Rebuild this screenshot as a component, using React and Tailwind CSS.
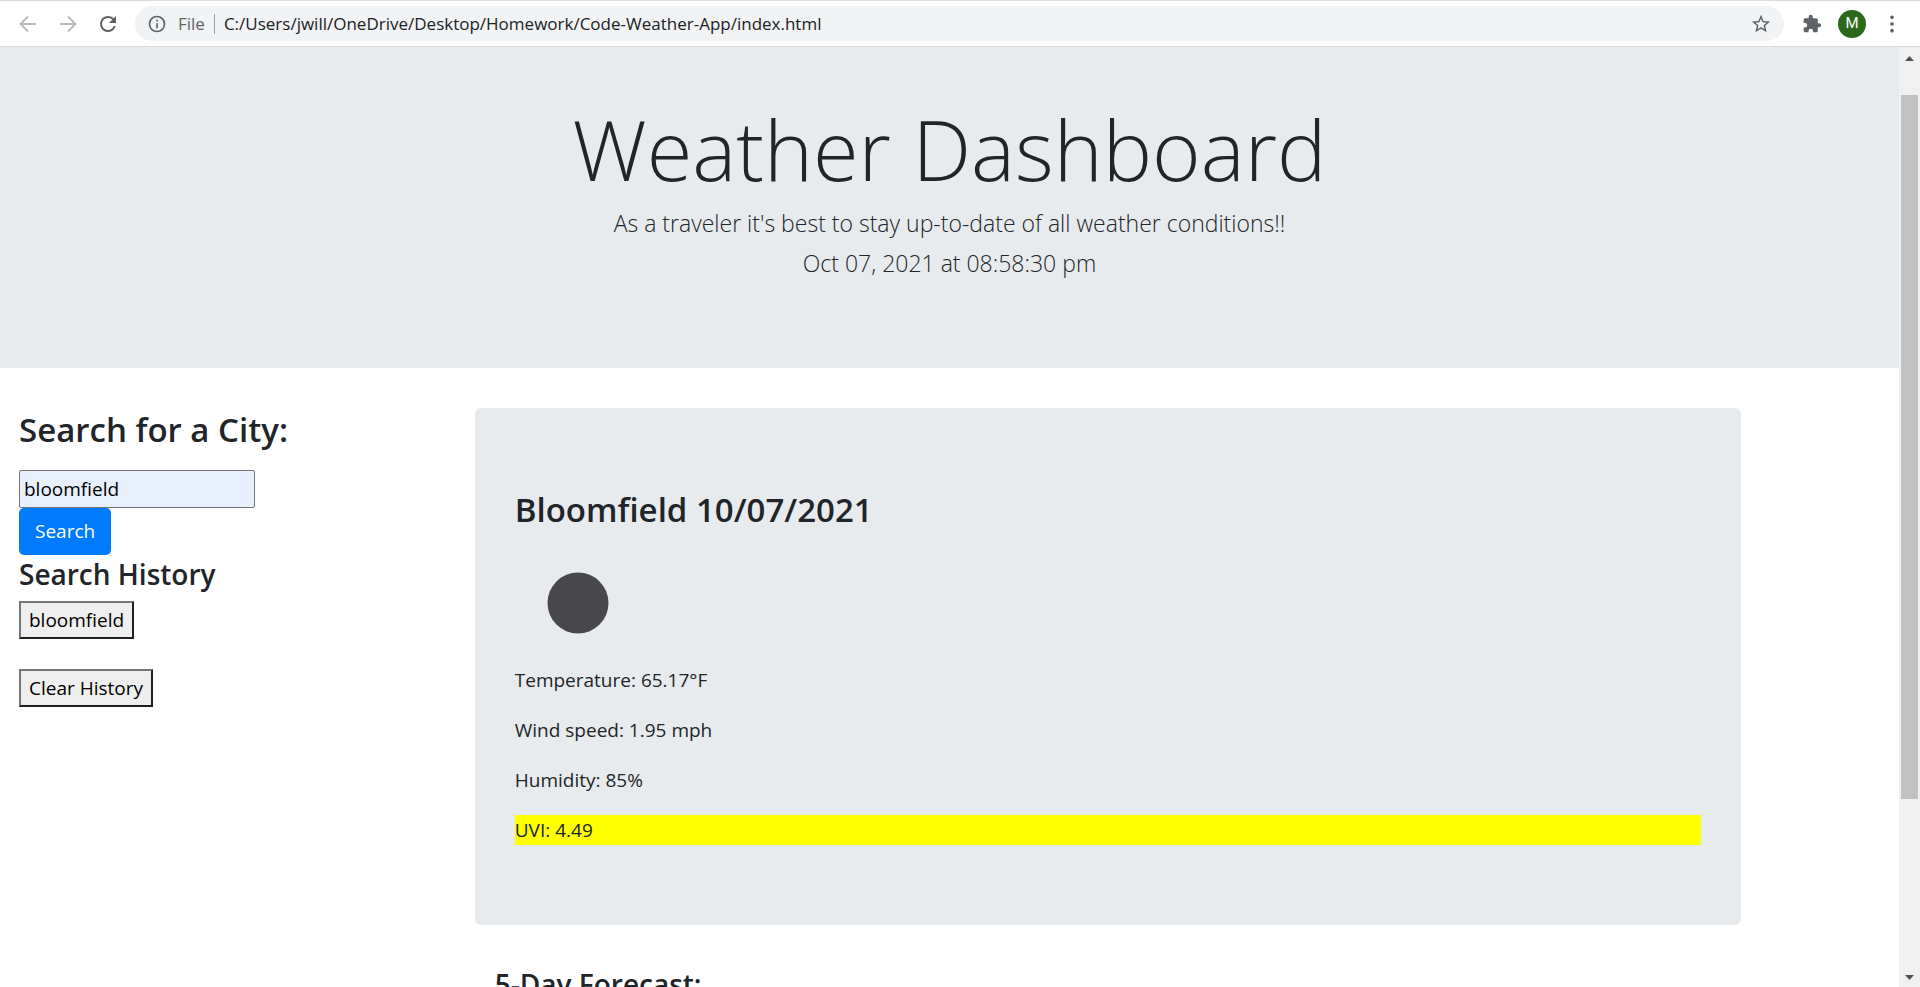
import React from "react";

const readings = [
  { text: "Temperature: 65.17°F", tone: "" },
  { text: "Wind speed: 1.95 mph", tone: "" },
  { text: "Humidity: 85%", tone: "" },
  { text: "UVI: 4.49", tone: "bg-[#ffff00]" },
];

function BrowserBar() {
  return (
    <header className="flex h-[47px] shrink-0 items-center border-t border-b border-[#d9dbde] bg-white pr-[18px] pl-4 text-[#5f6368]">
      <div className="flex items-center gap-4">
        <button type="button" aria-label="Back" className="text-[#bababc]">
          <svg className="size-6" viewBox="0 0 24 24" fill="none" stroke="currentColor" strokeWidth="2">
            <path d="M20 12H5M12 4.500 4.500 12l7.500 7.500" />
          </svg>
        </button>
        <button type="button" aria-label="Forward" className="text-[#bababc]">
          <svg className="size-6" viewBox="0 0 24 24" fill="none" stroke="currentColor" strokeWidth="2">
            <path d="M4 12h15M12 4.500l7.500 7.500-7.500 7.500" />
          </svg>
        </button>
        <button type="button" aria-label="Reload">
          <svg className="size-6" viewBox="0 0 24 24" fill="currentColor">
            <path d="M17.650 6.350A7.960 7.960 0 0 0 12 4a8 8 0 1 0 7.730 10h-2.080A6 6 0 1 1 12 6c1.660 0 3.140.690 4.220 1.780L13 11h7V4l-2.350 2.350z" />
          </svg>
        </button>
      </div>
      <div className="ml-[15px] flex h-[35px] grow items-center rounded-full bg-[#f1f3f4] pr-3 pl-3">
        <svg className="size-5" viewBox="0 0 24 24" fill="currentColor" aria-hidden="true">
          <path d="M11 17h2v-6h-2v6zm1-15a10 10 0 1 0 0 20 10 10 0 0 0 0-20zm0 18a8 8 0 1 1 0-16 8 8 0 0 1 0 16zM11 9h2V7h-2v2z" />
        </svg>
        <span className="ml-[11px] text-[17px]">File</span>
        <span className="mx-[9px] h-5 w-px bg-[#9aa0a6]" />
        <input
          aria-label="Address"
          defaultValue="C:/Users/jwill/OneDrive/Desktop/Homework/Code-Weather-App/index.html"
          className="min-w-0 grow bg-transparent text-[17px] text-[#202124] outline-none"
        />
        <button type="button" aria-label="Bookmark">
          <svg className="size-[22px]" viewBox="0 0 24 24" fill="currentColor">
            <path d="m22 9.240-7.190-.620L12 2 9.190 8.630 2 9.240l5.460 4.730L5.820 21 12 17.270 18.180 21l-1.630-7.030L22 9.240zM12 15.400l-3.760 2.270 1-4.280-3.320-2.880 4.380-.380L12 6.100l1.710 4.040 4.380.380-3.320 2.880 1 4.280L12 15.400z" />
          </svg>
        </button>
      </div>
      <button type="button" aria-label="Extensions" className="ml-[18px]">
        <svg className="size-5" viewBox="0 0 24 24" fill="currentColor">
          <path d="M20.500 11H19V7a2 2 0 0 0-2-2h-4V3.500a2.500 2.500 0 0 0-5 0V5H4a2 2 0 0 0-2 2v3.800h1.500a2.700 2.700 0 0 1 0 5.400H2V20a2 2 0 0 0 2 2h3.800v-1.500a2.700 2.700 0 0 1 5.400 0V22H17a2 2 0 0 0 2-2v-4h1.500a2.500 2.500 0 0 0 0-5z" />
        </svg>
      </button>
      <button type="button" aria-label="Profile" className="ml-4 flex size-7 items-center justify-center rounded-full bg-[#2b6a1b] font-['Roboto',sans-serif] text-[15px] text-white">
        M
      </button>
      <button type="button" aria-label="Menu" className="ml-4">
        <svg className="size-5" viewBox="0 0 24 24" fill="currentColor">
          <circle cx="12" cy="4" r="2.200" />
          <circle cx="12" cy="12" r="2.200" />
          <circle cx="12" cy="20" r="2.200" />
        </svg>
      </button>
    </header>
  );
}

function Scrollbar() {
  return (
    <div className="flex w-[21px] shrink-0 flex-col items-center bg-[#f0f0f0] pt-[9px] pb-[7px]" aria-hidden="true">
      <svg className="h-[5px] w-[9px]" viewBox="0 0 9 5" fill="#505050">
        <path d="M0 5 4.500 0 9 5z" />
      </svg>
      <div className="mt-[34px] flex w-[17px] grow flex-col">
        <div className="h-4/5 bg-[#c1c1c1]" />
      </div>
      <svg className="h-[5px] w-[9px]" viewBox="0 0 9 5" fill="#505050">
        <path d="M0 0 4.500 5 9 0z" />
      </svg>
    </div>
  );
}

function SearchPanel() {
  return (
    <aside className="w-1/4 px-[19px]">
      <form onSubmit={(e) => e.preventDefault()}>
        <h2 className="text-[33px] leading-[44px] font-semibold">
          <label htmlFor="city">Search for a City:</label>
        </h2>
        <input
          id="city"
          defaultValue="bloomfield"
          className="mt-[18px] block h-[38px] w-[236px] rounded-[2px] border border-[#767676] bg-[#e8f0fe] px-1 text-[19px] text-black"
        />
        <button type="submit" className="block h-[47px] rounded-[5px] bg-[#007bff] px-4 text-[19px] text-white">
          Search
        </button>
      </form>
      <h3 className="text-[28px] leading-[38px] font-semibold">Search History</h3>
      <button type="button" className="mt-2 block h-[38px] border-2 border-[#767676] border-r-[#212121] border-b-[#212121] bg-[#efefef] px-2 text-[19px] text-black">
        bloomfield
      </button>
      <button type="button" className="mt-[30px] block h-[38px] border-2 border-[#767676] border-r-[#212121] border-b-[#212121] bg-[#efefef] px-2 text-[19px] text-black">
        Clear History
      </button>
    </aside>
  );
}

function CurrentWeather() {
  return (
    <section className="rounded-md bg-[#e8ebee] px-10 py-20">
      <h2 className="text-[33px] leading-[44px] font-semibold">Bloomfield 10/07/2021</h2>
      <svg className="mt-2 size-[125px]" viewBox="0 0 125 125" role="img" aria-label="Clear sky">
        <circle cx="63" cy="63" r="30.500" fill="#48484a" />
      </svg>
      <div className="flex flex-col gap-5 text-[19px] leading-[30px]">
        {readings.map((r) => (
          <p key={r.text} className={r.tone}>
            {r.text}
          </p>
        ))}
      </div>
    </section>
  );
}

export default function App() {
  return (
    <div className="flex h-screen flex-col overflow-hidden bg-white font-['Open_Sans','Noto_Sans',sans-serif] text-[#212529]">
      <BrowserBar />
      <div className="flex min-h-0 grow">
        <main className="min-w-0 grow overflow-hidden">
          <div className="bg-[#e8ebee] pt-12 pb-[85px] text-center font-light">
            <h1 className="text-[83px] leading-[108px]">Weather Dashboard</h1>
            <p className="text-[23px] leading-10">
              As a traveler it's best to stay up-to-date of all weather conditions!!
            </p>
            <p className="text-[23px] leading-10">Oct 07, 2021 at 08:58:30 pm</p>
          </div>
          <div className="flex pt-10">
            <SearchPanel />
            <div className="w-2/3">
              <CurrentWeather />
              <h3 className="mt-10 px-5 text-[28px] leading-[38px] font-semibold">5-Day Forecast:</h3>
            </div>
          </div>
        </main>
        <Scrollbar />
      </div>
    </div>
  );
}
